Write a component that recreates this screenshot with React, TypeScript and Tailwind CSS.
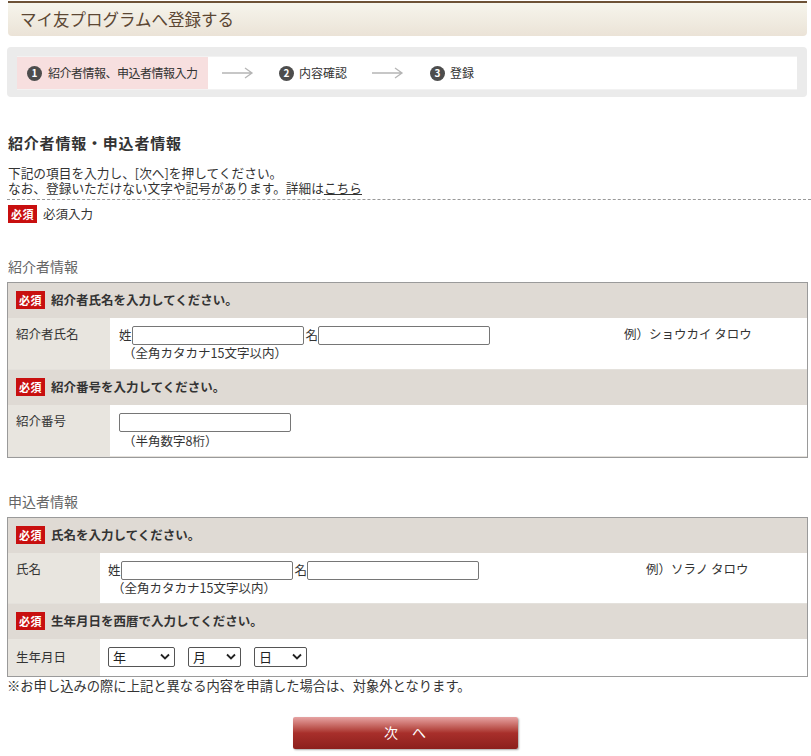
import React from 'react';

const Badge: React.FC = () => (
    <span className="inline-flex items-center justify-center w-[29px] h-[18px] bg-[#c80f0f] text-white text-[11px] font-bold leading-none tracking-[0.5px]">
        必須
    </span>
);

const StepNum: React.FC<{ n: number }> = ({ n }) => (
    <span className="inline-flex items-center justify-center w-[15px] h-[15px] rounded-full bg-[#4d4d4d] text-white text-[10px] font-bold leading-none">
        {n}
    </span>
);

const Arrow: React.FC = () => (
    <svg width="32" height="12" viewBox="0 0 32 12" className="text-[#b5b5b5]">
        <path d="M0 6 H30 M23 1 L30 6 L23 11" fill="none" stroke="currentColor" strokeWidth="1.3" />
    </svg>
);

const TextInput: React.FC = () => (
    <input type="text" className="w-[172px] h-[19px] border border-[#767676] rounded-[2px] bg-white outline-none" />
);

const HeadRow: React.FC<{ text: string }> = ({ text }) => (
    <div className="h-[35px] bg-[#dfdad4] flex items-center gap-[6px] pl-[8px]">
        <Badge />
        <span className="text-[12.5px] font-bold text-[#333]">{text}</span>
    </div>
);

const Select: React.FC<{ label: string; w: string }> = ({ label, w }) => (
    <div className={`${w} h-[20px] border border-[#555] rounded-[2px] flex items-center justify-between px-[4px] bg-white`}>
        <span className="text-[13px] text-[#222] leading-none">{label}</span>
        <svg width="10" height="7" viewBox="0 0 10 7">
            <path d="M1 1.5 L5 5.5 L9 1.5" fill="none" stroke="#222" strokeWidth="1.8" />
        </svg>
    </div>
);

const App: React.FC = () => {
    return (
        <div className="w-[811px] min-h-[756px] bg-white text-[#333] text-[12.5px] font-['Noto_Sans_CJK_JP',sans-serif] pb-[6px]">
            {/* title */}
            <div className="pt-px">
                <div className="ml-[8px] w-[799px] h-[35px] border-t-2 border-[#6d5236] rounded-b-[4px] bg-gradient-to-b from-[#f6f5ec] to-[#ebe3d7] flex items-center pl-[12px]">
                    <h1 className="text-[16.5px] text-[#5c4733]">マイ友プログラムへ登録する</h1>
                </div>
            </div>

            {/* steps */}
            <div className="ml-[7px] mt-[11px] w-[800px] h-[50px] bg-[#ebebeb] rounded-[4px] px-[10px] py-[9px]">
                <div className="h-[34px] bg-white flex items-center border-y border-[#f2f2f2]">
                    <div className="w-[191px] h-full bg-[#f7dfdf] flex items-center gap-[6px] pl-[10px]">
                        <StepNum n={1} />
                        <span className="text-[12px] text-[#333] tracking-[-0.5px]">紹介者情報、申込者情報入力</span>
                    </div>
                    <div className="ml-[14px]"><Arrow /></div>
                    <div className="ml-[25px] flex items-center gap-[5px]">
                        <StepNum n={2} />
                        <span className="text-[12px]">内容確認</span>
                    </div>
                    <div className="ml-[25px]"><Arrow /></div>
                    <div className="ml-[26px] flex items-center gap-[5px]">
                        <StepNum n={3} />
                        <span className="text-[12px]">登録</span>
                    </div>
                </div>
            </div>

            {/* intro */}
            <h2 className="ml-[8px] mt-[33px] text-[15px] font-bold text-[#333] leading-[26px] tracking-[0.8px]">紹介者情報・申込者情報</h2>
            <div className="ml-[8px] mt-[9px] text-[12.7px]">
                <div className="leading-[15px]">下記の項目を入力し、[次へ]を押してください。</div>
                <div className="leading-[15px]">
                    なお、登録いただけない文字や記号があります。詳細は<a href="#" className="underline">こちら</a>
                </div>
            </div>
            <div className="ml-[7px] mt-[4px] border-t border-dashed border-[#999]" />
            <div className="ml-[8px] mt-[5px] flex items-center gap-[6px]">
                <Badge />
                <span className="text-[12.5px]">必須入力</span>
            </div>

            {/* referrer */}
            <div className="ml-[8px] mt-[32px] text-[14px] text-[#666]">紹介者情報</div>
            <div className="ml-[7px] mt-[5px] w-[801px] border border-[#9a9a9a]">
                <HeadRow text="紹介者氏名を入力してください。" />
                <div className="flex h-[52px] border-b border-[#e4e1dc]">
                    <div className="w-[102px] bg-[#e8e5df] pl-[8px] pt-[7px]">紹介者氏名</div>
                    <div className="w-[514px] pl-[9px] pt-[8px]">
                        <div className="flex items-center">
                            <span>姓</span><TextInput /><span className="ml-[2px]">名</span><TextInput />
                        </div>
                        <div className="pl-[4px] leading-[16px]">（全角カタカナ15文字以内）</div>
                    </div>
                    <div className="pt-[7px]">例）ショウカイ タロウ</div>
                </div>
                <HeadRow text="紹介番号を入力してください。" />
                <div className="flex h-[52px] border-b border-[#e4e1dc]">
                    <div className="w-[102px] bg-[#e8e5df] pl-[8px] pt-[7px]">紹介番号</div>
                    <div className="pl-[9px] pt-[8px]">
                        <TextInput />
                        <div className="pl-[4px] leading-[16px]">（半角数字8桁）</div>
                    </div>
                </div>
            </div>

            {/* applicant */}
            <div className="ml-[8px] mt-[33px] text-[14px] text-[#666]">申込者情報</div>
            <div className="ml-[7px] mt-[5px] w-[801px] border border-[#9a9a9a]">
                <HeadRow text="氏名を入力してください。" />
                <div className="flex h-[51px] border-b border-[#e4e1dc]">
                    <div className="w-[92px] bg-[#e8e5df] pl-[8px] pt-[7px]">氏名</div>
                    <div className="w-[546px] pl-[8px] pt-[8px]">
                        <div className="flex items-center">
                            <span>姓</span><TextInput /><span className="ml-[2px]">名</span><TextInput />
                        </div>
                        <div className="pl-[4px] leading-[16px]">（全角カタカナ15文字以内）</div>
                    </div>
                    <div className="pt-[7px]">例）ソラノ タロウ</div>
                </div>
                <HeadRow text="生年月日を西暦で入力してください。" />
                <div className="flex h-[37px]">
                    <div className="w-[92px] bg-[#e8e5df] pl-[8px] pt-[9px]">生年月日</div>
                    <div className="pl-[8px] pt-[8px] flex gap-[13px]">
                        <Select label="年" w="w-[67px]" />
                        <Select label="月" w="w-[53px]" />
                        <Select label="日" w="w-[53px]" />
                    </div>
                </div>
            </div>
            <p className="ml-[7px] text-[13.3px] leading-[17px]">※お申し込みの際に上記と異なる内容を申請した場合は、対象外となります。</p>

            {/* next */}
            <div className="flex justify-center mt-[23px] pr-[1px]">
                <button className="w-[225px] h-[32px] rounded-[2px] bg-gradient-to-b from-[#e6a3a3] via-[#a82f2b] to-[#8c1f1c] text-white text-[14px] tracking-[14px] shadow-[1px_1px_2px_rgba(0,0,0,0.35)] pl-[14px]">
                    次へ
                </button>
            </div>
        </div>
    );
};

export default App;
